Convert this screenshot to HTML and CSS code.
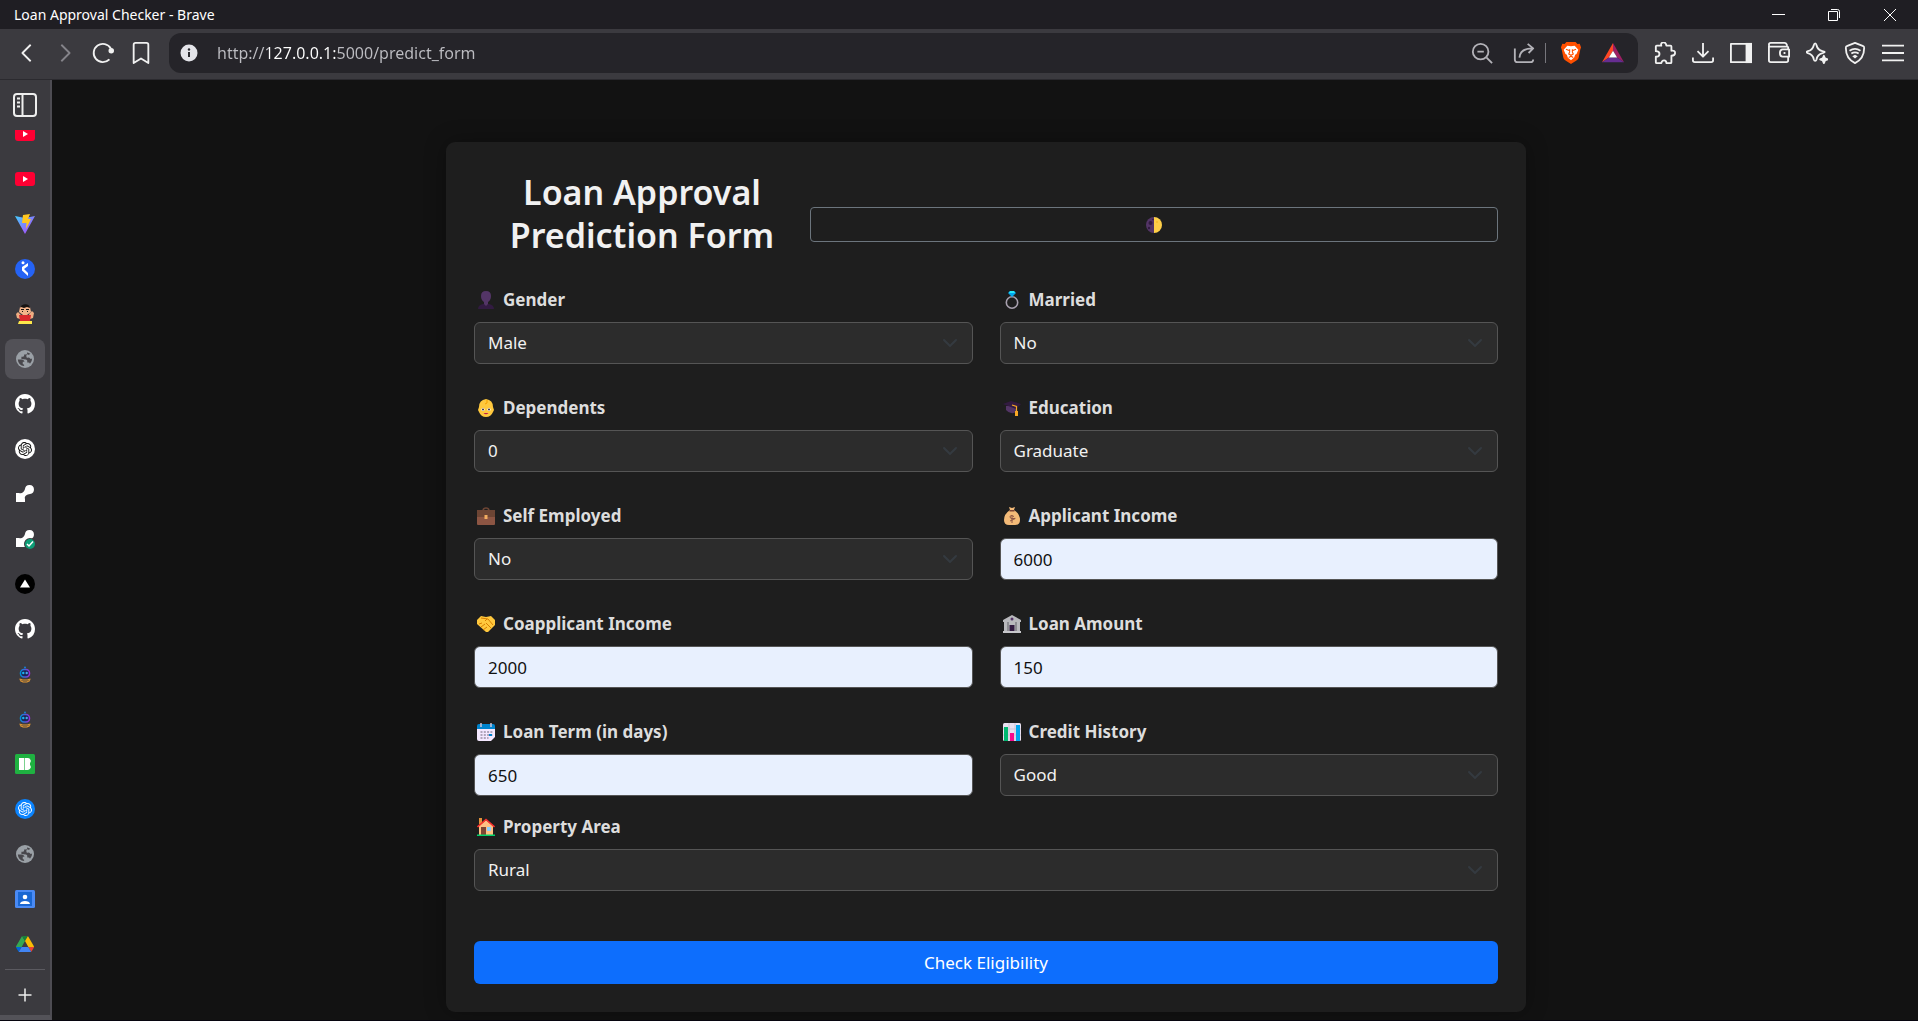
FILE: index.html
```html
<!DOCTYPE html>
<html lang="en">
<head>
<meta charset="utf-8">
<meta name="viewport" content="width=device-width, initial-scale=1">
<title>Loan Approval Checker</title>
<link rel="stylesheet" href="styles.css">
</head>
<body>
<svg class="defs" aria-hidden="true">
  <symbol id="github" viewBox="0 0 16 16"><path fill="#fff" d="M8 0C3.58 0 0 3.58 0 8c0 3.54 2.29 6.53 5.47 7.59.4.07.55-.17.55-.38 0-.19-.01-.82-.01-1.49-2.01.37-2.53-.49-2.69-.94-.09-.23-.48-.94-.82-1.13-.28-.15-.68-.52-.01-.53.63-.01 1.08.58 1.23.82.72 1.21 1.87.87 2.33.66.07-.52.28-.87.51-1.07-1.78-.2-3.64-.89-3.64-3.95 0-.87.31-1.59.82-2.15-.08-.2-.36-1.02.08-2.12 0 0 .67-.21 2.2.82.64-.18 1.32-.27 2-.27s1.36.09 2 .27c1.53-1.04 2.2-.82 2.2-.82.44 1.1.16 1.92.08 2.12.51.56.82 1.27.82 2.15 0 3.07-1.87 3.75-3.65 3.95.29.25.54.73.54 1.48 0 1.07-.01 1.93-.01 2.2 0 .21.15.46.55.38A8.01 8.01 0 0016 8c0-4.42-3.58-8-8-8z"/></symbol>
  <symbol id="youtube" viewBox="0 0 20 20"><rect y="3" width="20" height="14" rx="3" fill="#ff0033"/><path d="M8 7l5 3-5 3z" fill="#fff"/></symbol>
  <symbol id="globe" viewBox="2 2 20 20"><circle cx="12" cy="12" r="10" fill="#9aa0a6"/><path fill="#47464b" d="M4 11.500h6q2 .5 2 2.500-2 0-2 1.500t-2.500 1.700l2 2.300Q4 18 4 11.500zM13 4q-1 2.500-3 2.500t-1.500 2 2.500 1.500q1 2 3 2t2.500 1.500q1.500 1 3.500-1.500 0-6.500-7-8z" opacity="0"/><path fill="#47464b" d="M4 12l5-.2q3 .2 3.200 3.200-2.200-.2-2.700 1.200t.5 3.500Q4.500 18.500 4 12zM13.500 4.200Q14 6 12 6.500T9.800 8.700 8 11H4.100Q5 4.500 13.500 4.200zM13 19.900q.2-2 2-2.400t1.500-2.500q-2-1.200-3.700-2.200t-.6-3.300 3.300-.5 4-1q.8 2 .4 5.500-1.200 5.500-6.900 6.400z" opacity="0"/><path fill="#48474c" d="M4 12.500h4.500q2.500.2 3 2.500h-2v2.500l1.500 1v1.300Q4.500 19 4 12.500zM14.500 4.500v1q-.3 1.500-2 1.500H11v1.500q-.3 1-1.500 1H8V12l5 .5q1.500.3 1.500 1.500v2h1.500q1 .2 1.500 1.200 2.500-2.200 2.400-5.700-1.700 1-2.400-.2t-2.500-.8-1.500-2 1.500-1.500 3-.7Q16 5 14.500 4.500z"/></symbol>
  <symbol id="knot" viewBox="0 0 24 24"><path fill="currentColor" d="M22.2819 9.8211a5.9847 5.9847 0 0 0-.5157-4.9108 6.0462 6.0462 0 0 0-6.5098-2.9A6.0651 6.0651 0 0 0 4.9807 4.1818a5.9847 5.9847 0 0 0-3.9977 2.9 6.0462 6.0462 0 0 0 .7427 7.0966 5.98 5.98 0 0 0 .511 4.9107 6.051 6.051 0 0 0 6.5146 2.9001A5.9847 5.9847 0 0 0 13.2599 24a6.0557 6.0557 0 0 0 5.7718-4.2058 5.9894 5.9894 0 0 0 3.9977-2.9001 6.0557 6.0557 0 0 0-.7475-7.0729zm-9.022 12.6081a4.4755 4.4755 0 0 1-2.8764-1.0408l.1419-.0804 4.7783-2.7582a.7948.7948 0 0 0 .3927-.6813v-6.7369l2.02 1.1686a.071.071 0 0 1 .038.052v5.5826a4.504 4.504 0 0 1-4.4945 4.4944zm-9.6607-4.1254a4.4708 4.4708 0 0 1-.5346-3.0137l.142.0852 4.783 2.7582a.7712.7712 0 0 0 .7806 0l5.8428-3.3685v2.3324a.0804.0804 0 0 1-.0332.0615L9.74 19.9502a4.4992 4.4992 0 0 1-6.1408-1.6464zM2.3408 7.8956a4.485 4.485 0 0 1 2.3655-1.9728V11.6a.7664.7664 0 0 0 .3879.6765l5.8144 3.3543-2.0201 1.1685a.0757.0757 0 0 1-.071 0l-4.8303-2.7865A4.504 4.504 0 0 1 2.3408 7.872zm16.5963 3.8558L13.1038 8.364 15.1192 7.2a.0757.0757 0 0 1 .071 0l4.8303 2.7913a4.4944 4.4944 0 0 1-.6765 8.1042v-5.6772a.79.79 0 0 0-.407-.667zm2.0107-3.0231l-.142-.0852-4.7735-2.7818a.7759.7759 0 0 0-.7854 0L9.409 9.2297V6.8974a.0662.0662 0 0 1 .0284-.0615l4.8303-2.7866a4.4992 4.4992 0 0 1 6.6802 4.66zM8.3065 12.863l-2.02-1.1638a.0804.0804 0 0 1-.038-.0567V6.0742a4.4992 4.4992 0 0 1 7.3757-3.4537l-.142.0805L8.704 5.459a.7948.7948 0 0 0-.3927.6813zm1.0976-2.3654l2.602-1.4998 2.6069 1.4998v2.9994l-2.5974 1.4997-2.6067-1.4997Z"/></symbol>
  <symbol id="dub" viewBox="0 0 20 20"><path fill="#fff" d="M1 9h3c3 1 5-1 6-4a4.500 4.500 0 1 1 5 5c-3 .5-6 2-5 5v3H1z"/></symbol>
  <symbol id="robot" viewBox="0 0 20 20"><circle cx="10" cy="3.500" r="1" fill="#1583d8"/><rect x="5.500" y="5.500" width="9" height="7.500" rx="3.500" fill="#1c2454" stroke="url(#robotGradient)" stroke-width="1.500"/><circle cx="8.300" cy="9" r="1.200" fill="#19b7ee"/><circle cx="11.700" cy="9" r="1.200" fill="#4aa3ee"/><path d="M4.500 15l3 1h5l3-1M5 16.500l3 1.500h4l3-1.500" stroke="#e79b33" fill="none" stroke-width="1.100"/></symbol>
  <linearGradient id="robotGradient"><stop stop-color="#008fd8"/><stop offset="1" stop-color="#9a2bd9"/></linearGradient>
  <linearGradient id="viteGradient" x1="0" y1="0" x2="1" y2="1"><stop stop-color="#41d1ff"/><stop offset="1" stop-color="#bd34fe"/></linearGradient>
  <symbol id="caret" viewBox="0 0 16 16"><path fill="none" stroke="#343a40" stroke-linecap="round" stroke-linejoin="round" stroke-width="2" d="m2 5 6 6 6-6"/></symbol>
</svg>

<header class="titlebar">
  <span class="window-title">Loan Approval Checker - Brave</span>
  <div class="window-controls">
    <button type="button" aria-label="Minimize"><svg viewBox="0 0 14 14"><path d="M1 6.500h13"/></svg></button>
    <button type="button" aria-label="Restore"><svg viewBox="0 0 14 14"><path d="M1.500 3.500h9v9h-9zM4 1.500h6.500q2 0 2 2V10"/></svg></button>
    <button type="button" aria-label="Close"><svg viewBox="0 0 14 14"><path d="M1 1l12 12M13 1L1 13"/></svg></button>
  </div>
</header>

<nav class="toolbar" aria-label="Browser toolbar">
  <div class="tool-group">
    <button type="button" aria-label="Back"><svg class="bold" viewBox="0 0 24 24"><path d="M16 3l-9 9 9 9"/></svg></button>
    <button type="button" aria-label="Forward" class="faded"><svg viewBox="0 0 24 24"><path d="M8 3l9 9-9 9"/></svg></button>
    <button type="button" aria-label="Reload"><svg class="bold" viewBox="0 0 24 24"><path d="M19 19a10 10 0 1 1 1.500-12"/><circle cx="21" cy="9.500" r="2" fill="currentColor"/></svg></button>
    <button type="button" aria-label="Bookmark"><svg viewBox="0 0 24 24"><path d="M4 3q0-2 2-2h12q2 0 2 2v20l-8-5-8 5z"/></svg></button>
  </div>
  <div class="address">
    <svg class="info" viewBox="0 0 18 18"><circle cx="9" cy="9" r="8.500" fill="#e4e4e9"/><path d="M9 8v5" stroke="#29292e" stroke-width="2"/><circle cx="9" cy="5.500" r="1.200" fill="#29292e"/></svg>
    <input class="url" type="text" aria-label="Address" value="http://127.0.0.1:5000/predict_form">
    <button type="button" aria-label="Zoom out"><svg viewBox="0 0 24 24"><circle cx="10.500" cy="10.500" r="8.500"/><path d="M7 10.500h7M17 17l6 6"/></svg></button>
    <button type="button" aria-label="Share"><svg viewBox="0 0 24 24"><path d="M2 7v12q0 3 3 3h14q3 0 3-3M7 17q1-10 14-10M16 2l6 5-5 5"/></svg></button>
    <span class="address-divider"></span>
    <button type="button" aria-label="Brave Shields"><svg class="logo" viewBox="0 0 24 24"><path fill="#ff5000" d="M7 0h10l2 2.300 2.500-.3 1.500 4-.8 2-1.800 9c-.5 3-5.400 5-8.400 7-3-2-7.900-4-8.400-7L1.800 8 1 6l1.500-4 2.500.3z"/><path fill="#fff" d="M8 4l4 .7L16 4l4 4.500-2 4.500-1.500 1-1 3-3.500 2.800-3.500-2.800-1-3-1.500-1L4 8.500z"/><path fill="none" stroke="#ff5000" stroke-width="1.200" d="M6.500 8l3.500 1.300M17.500 8l-3.500 1.300M10.500 8v3l-1 2 2.500 1.500 2.500-1.500-1-2V8M9.500 17l2.500-1.500 2.500 1.500"/></svg></button>
    <button type="button" aria-label="Brave Rewards"><svg class="logo" viewBox="0 0 24 22"><path fill="#ff4724" d="M12 0v8.500L7.500 16 0 21z"/><path fill="#9e1f63" d="M12 0l12 21-7.500-5L12 8.500z"/><path fill="#662d91" d="M0 21l7.500-5h9l7.500 5z"/><path fill="#fff" d="M12 8.500L16.500 16h-9z"/></svg></button>
  </div>
  <div class="tool-group">
    <button type="button" aria-label="Extensions"><svg viewBox="0 0 24 24"><path d="M2 5q0-1 1-1h5q-1-3 2-3.500T13.500 4H18q1 0 1 1v4.500q4-.5 4 2.500t-4 3V22q0 1-1 1h-4.500q0-3-2.500-3t-3 3H3q-1 0-1-1v-6q4 0 4-3t-4-3z"/></svg></button>
    <button type="button" aria-label="Downloads"><svg class="bold" viewBox="0 0 24 24"><path d="M12 1v14M6 10l6 6 6-6M1 17v3q0 2 2 2h18q2 0 2-2v-3"/></svg></button>
    <button type="button" aria-label="Side panel"><svg viewBox="0 0 24 24"><path d="M1 2h22v20H1z"/><path d="M17 1h7v22h-7z" fill="currentColor" stroke="none"/></svg></button>
    <button type="button" aria-label="Wallet"><svg viewBox="0 0 24 24"><path d="M22 8V6q0-1-1-1H2q-1 0-1-2t2-2h15q2 0 3 3M1 4v16q0 2 2 2h17q2 0 2-2v-4M23 8v8h-7q-3 0-3-4t3-4zM18 11v2"/></svg></button>
    <button type="button" aria-label="Leo AI"><svg viewBox="0 0 24 24"><path d="M10 1.500q1 0 1.500 2 1 5 6.500 6.500 2.500.5 2.500 1t-2.500 1.200q-5.500 1.300-6.500 6.800-.5 1.500-1.500 1.500t-1.500-1.500Q7.500 13.500 2 12.200q-1.500-.7-1.500-1.200T2 10Q7 9 8.500 3.500q.5-2 1.500-2z"/><path d="M19.500 15l1.200 2.800 2.800 1.200-2.800 1.200-1.200 2.800-1.200-2.800-2.800-1.200 2.800-1.200z" fill="currentColor"/></svg></button>
    <button type="button" aria-label="VPN"><svg viewBox="0 0 24 24"><path d="M12 1l9 3.500q1 0 1 2Q22 18 12 23 2 18 2 6.500q0-2 1-2zM6 9.500q6-4 12 0M8 12.500q4-2.500 8 0"/><path d="M12 14l3 1.500L12 18l-3-2.500z" fill="currentColor" stroke="none"/></svg></button>
    <button type="button" aria-label="Menu"><svg viewBox="0 0 24 24"><path d="M0 4h24M0 12h24M0 20h24"/></svg></button>
  </div>
</nav>

<div class="workspace">
  <aside class="tabs" aria-label="Vertical tabs">
    <button type="button" class="tabs-toggle" aria-label="Toggle tabs"><svg viewBox="0 0 24 24" fill="none" stroke="#eee" stroke-width="2"><rect x="1" y="1" width="22" height="22" rx="3"/><path d="M9.500 1v22"/><path d="M4 5.500h3M4 9.500h3M4 13.500h3"/></svg></button>
    <div class="tab-list">
      <button type="button" class="tab clipped" aria-label="YouTube"><svg><use href="#youtube"/></svg></button>
      <button type="button" class="tab" aria-label="YouTube"><svg><use href="#youtube"/></svg></button>
      <button type="button" class="tab" aria-label="Vite"><svg viewBox="0 0 20 20"><path fill="url(#viteGradient)" d="M0 2l10 2L20 2 10 20z"/><path fill="#ffc61f" d="M8 1l7-1-2 5h3l-5 10 .5-6H7z"/></svg></button>
      <button type="button" class="tab" aria-label="Runner"><svg viewBox="0 0 20 20"><circle cx="10" cy="10" r="10" fill="#2563f5"/><circle cx="8" cy="3.800" r="1.500" fill="#fff"/><path fill="#fff" d="M13 4v3l-4 3 4 4v3l-6-5.500V8z"/></svg></button>
      <button type="button" class="tab" aria-label="Cartoon"><svg viewBox="0 0 20 20"><path fill="#efad82" d="M1 10l2-2 3 3-1 4-3-1zM19 9l-2-2-3 3 1 5 3-1z"/><path fill="#f3b48a" d="M5 3l5-2 5 2 1 5-4 3H8L4 8z"/><path fill="#171312" d="M5 4c1-5 10-5 10 0l-3-1-3 1-3-1z"/><path stroke="#171312" d="M6 5.500h3M11 5.500h3M7 7.500h1M12 7.500h1"/><path fill="#d9292d" d="M4 11h12l-1 6H5z"/><path fill="#fde74a" d="M4 17h13v3H3z"/></svg></button>
      <button type="button" class="tab active" aria-label="Loan Approval Checker"><svg class="small"><use href="#globe"/></svg></button>
      <button type="button" class="tab" aria-label="GitHub"><svg><use href="#github"/></svg></button>
      <button type="button" class="tab" aria-label="ChatGPT"><svg class="gpt" viewBox="0 0 20 20"><circle cx="10" cy="10" r="10" fill="#fff"/><use href="#knot" x="3" y="3" width="14" height="14"/></svg></button>
      <button type="button" class="tab" aria-label="Links"><svg><use href="#dub"/></svg></button>
      <button type="button" class="tab" aria-label="Links verified"><svg viewBox="0 0 20 20"><use href="#dub"/><circle cx="15" cy="15" r="6" fill="#3b3a3f"/><circle cx="15" cy="15" r="5" fill="#0c9d76"/><path d="M12 15l2 2 4-4.500" fill="none" stroke="#fff" stroke-width="1.500"/></svg></button>
      <button type="button" class="tab" aria-label="Vercel"><svg viewBox="0 0 20 20"><circle cx="10" cy="10" r="10"/><path fill="#fff" d="M10 5.500l5 8H5z"/></svg></button>
      <button type="button" class="tab" aria-label="GitHub"><svg><use href="#github"/></svg></button>
      <button type="button" class="tab" aria-label="Assistant"><svg><use href="#robot"/></svg></button>
      <button type="button" class="tab" aria-label="Assistant"><svg><use href="#robot"/></svg></button>
      <button type="button" class="tab" aria-label="Icons"><svg viewBox="0 0 20 20"><rect width="20" height="20" rx="1.500" fill="#1fb141"/><path fill="#fff" d="M4 4h5v12H4zM9 4h4a3 3 0 0 1 2 5v2a3 3 0 0 1-2 5H9z"/><path stroke="#1fb141" stroke-width=".6" d="M9.500 4v12"/></svg></button>
      <button type="button" class="tab" aria-label="Assistant"><svg class="gpt-blue" viewBox="0 0 20 20"><circle cx="10" cy="10" r="10" fill="#0b84ff"/><use href="#knot" x="3" y="3" width="14" height="14"/></svg></button>
      <button type="button" class="tab" aria-label="Page"><svg class="small"><use href="#globe"/></svg></button>
      <button type="button" class="tab" aria-label="Contacts"><svg viewBox="0 0 20 20"><rect y="1" width="20" height="18" rx="1.500" fill="#4a8af4"/><path fill="#1967d2" d="M3 3h14v14H3z"/><circle cx="10" cy="8" r="2.300" fill="#fff"/><path fill="#fff" d="M5 15c0-4 10-4 10 0z"/></svg></button>
      <button type="button" class="tab" aria-label="Drive"><svg class="small" viewBox="0 0 87.300 78"><path d="m6.600 66.850 3.850 6.650c.8 1.400 1.950 2.500 3.300 3.300l13.750-23.800h-27.500c0 1.550.4 3.100 1.200 4.500z" fill="#0066da"/><path d="m43.650 25-13.750-23.800c-1.350.8-2.500 1.900-3.300 3.300l-25.400 44a9.060 9.060 0 0 0-1.200 4.500h27.500z" fill="#34a853"/><path d="m73.550 76.800c1.350-.8 2.500-1.900 3.300-3.300l1.600-2.750 7.650-13.250c.8-1.400 1.200-2.950 1.200-4.500h-27.500l5.850 11.500z" fill="#ea4335"/><path d="m43.650 25 13.750-23.800c-1.350-.8-2.900-1.200-4.500-1.200h-18.500c-1.600 0-3.150.45-4.500 1.200z" fill="#188038"/><path d="m59.800 53h-32.300l-13.750 23.800c1.350.8 2.900 1.200 4.500 1.200h50.800c1.600 0 3.150-.45 4.500-1.200z" fill="#4285f4"/><path d="m73.400 26.500-12.700-22c-.8-1.400-1.950-2.500-3.300-3.300l-13.750 23.800 16.150 28h27.450c0-1.550-.4-3.100-1.200-4.500z" fill="#fbbc04"/></svg></button>
    </div>
    <hr class="tabs-rule">
    <button type="button" class="tab" aria-label="New tab"><svg viewBox="0 0 20 20"><path d="M10 3.500v13M3.500 10h13" stroke="#eee" stroke-width="1.500"/></svg></button>
  </aside>

  <main class="page">
    <section class="card">
      <div class="card-head">
        <h1>Loan Approval Prediction Form</h1>
        <button type="button" class="theme-toggle" aria-label="Toggle theme"><svg viewBox="0 0 16 16"><path fill="#533566" d="M8 0a8 8 0 0 0 0 16z"/><path fill="#ffcf48" d="M8 0a8 8 0 0 1 0 16z"/><circle cx="4.500" cy="6" r="2" fill="#321b41"/><circle cx="3" cy="11" r="1.200" fill="#321b41"/><circle cx="7" cy="2.500" r=".8" fill="#321b41"/><circle cx="11" cy="5" r="1" fill="#f9bc28"/></svg></button>
      </div>
      <form class="form">
        <div class="field">
          <label for="gender"><svg viewBox="0 0 18 18"><path fill="#321b41" d="M1 18q0-4 5-5h6q5 1 5 5z"/><path fill="#533566" d="M4 5q0-5 5-5t5 5q0 4-3 6v2l-2 2-2-2v-2Q4 9 4 5z"/></svg>Gender</label>
          <div class="select"><select id="gender"><option>Male</option><option>Female</option></select><svg><use href="#caret"/></svg></div>
        </div>
        <div class="field">
          <label for="married"><svg viewBox="0 0 18 18"><circle cx="9" cy="11.500" r="5.700" fill="none" stroke="#a8a0ae" stroke-width="1.600"/><path fill="#00a6ed" d="M7 0h4l2 2-4 4-4-4z"/><path fill="#26eafc" d="M7 0h4l1 2H6z"/></svg>Married</label>
          <div class="select"><select id="married"><option>No</option><option>Yes</option></select><svg><use href="#caret"/></svg></div>
        </div>
        <div class="field">
          <label for="dependents"><svg viewBox="0 0 18 18"><path fill="#ffc83d" d="M9 0q7 1 7 8l1 3-1 2q-2 5-7 5t-7-5l-1-2 1-3q0-7 7-8z"/><path fill="none" stroke="#f59f00" d="M10 1q1 4-2 4"/><circle cx="6" cy="10.500" r="1.600" fill="#fff"/><circle cx="12" cy="10.500" r="1.600" fill="#fff"/><circle cx="6" cy="10.500" r="1" fill="#402a32"/><circle cx="12" cy="10.500" r="1" fill="#402a32"/><path fill="#bb1d50" d="M6.500 14h5q-2.500 2.500-5 0z"/></svg>Dependents</label>
          <div class="select"><select id="dependents"><option>0</option><option>1</option><option>2</option><option>3+</option></select><svg><use href="#caret"/></svg></div>
        </div>
        <div class="field">
          <label for="education"><svg viewBox="0 0 18 18"><path fill="#533566" d="M3 7v4q4 5 11 2V7z"/><path fill="#321b41" d="M0 5l8-3 10 3-5 5z"/><path fill="none" stroke="#f9a825" stroke-width="1.200" d="M9 6l4.500 1.500V13"/><path fill="#f9a825" d="M12 12h3v5h-3z"/></svg>Education</label>
          <div class="select"><select id="education"><option>Graduate</option><option>Not Graduate</option></select><svg><use href="#caret"/></svg></div>
        </div>
        <div class="field">
          <label for="self-employed"><svg viewBox="0 0 18 18"><path fill="none" stroke="#6d4534" stroke-width="1.500" d="M6 4q0-3 3-3t3 3"/><rect y="3" width="18" height="15" rx="1" fill="#8c5543"/><path fill="#6d4534" d="M0 4q0-1 1-1h16q1 0 1 1v6H0z"/><rect x="7.500" y="8" width="3" height="4" fill="#f3ad61"/></svg>Self Employed</label>
          <div class="select"><select id="self-employed"><option>No</option><option>Yes</option></select><svg><use href="#caret"/></svg></div>
        </div>
        <div class="field">
          <label for="applicant-income"><svg viewBox="0 0 18 18"><path fill="#f3ba78" d="M6 0l3 1 3-1-1 3q6 4 6 10 0 5-5 5H6q-5 0-5-5Q1 7 7 3z"/><path fill="#7d4533" d="M6.500 3h5v1.500h-5z"/><path fill="none" stroke="#8d5543" d="M11 9.500q-4-2-4 .5t4 1.500-4 2.500M9 8v8"/></svg>Applicant Income</label>
          <input id="applicant-income" type="text" inputmode="numeric" value="6000">
        </div>
        <div class="field">
          <label for="coapplicant-income"><svg viewBox="0 0 18 18"><path fill="#ffc83d" d="M0 5l4-4 5 1 5-1 4 4v5l-7 7H9L0 9z"/><path fill="none" stroke="#d67d00" d="M4 3l7 1 5 6M8 6l2-2M2 9l3-1M4 12l4-3M6 15l4-3M9 8l5 5"/></svg>Coapplicant Income</label>
          <input id="coapplicant-income" type="text" inputmode="numeric" value="2000">
        </div>
        <div class="field">
          <label for="loan-amount"><svg viewBox="0 0 18 18"><path fill="#b9b9bd" d="M0 5l9-5 9 5v2H0zM1 7h16v9H1z"/><path fill="#8d8d92" d="M4 7h2v9H4zM12 7h2v9h-2z"/><path fill="#c8c8cc" d="M0 16h18v2H0z"/><path fill="#321b41" d="M6.500 10h5v6h-5z"/><circle cx="9" cy="4" r="1.500" fill="#533566"/></svg>Loan Amount</label>
          <input id="loan-amount" type="text" inputmode="numeric" value="150">
        </div>
        <div class="field">
          <label for="loan-term"><svg viewBox="0 0 18 18"><path fill="#f4e8ff" d="M0 3h18v11l-4 4H2q-2 0-2-2z"/><path fill="#0084ce" d="M0 6V3q0-2 2-2h14q2 0 2 2v3z"/><path stroke="#cdc4d6" stroke-width="1.500" d="M4 0v4M14 0v4"/><path stroke="#998ea4" stroke-width="1.500" stroke-dasharray="2 1.300" d="M3.500 9h12M3.500 12h12M3.500 15h8"/><path fill="#0084ce" d="M12 11h3v2h-3z"/></svg>Loan Term (in days)</label>
          <input id="loan-term" type="text" inputmode="numeric" value="650">
        </div>
        <div class="field">
          <label for="credit-history"><svg viewBox="0 0 18 18"><rect width="18" height="18" rx="1.500" fill="#e9e0f0"/><path stroke="#cdc4d6" d="M0 6h18M0 12h18M6 0v18M12 0v18"/><path fill="#00b870" d="M1 4h4v14H1z"/><path fill="#f70a8d" d="M7 10h4v8H7z"/><path fill="#00a6ed" d="M13 2h4v16h-4z"/></svg>Credit History</label>
          <div class="select"><select id="credit-history"><option>Good</option><option>Bad</option></select><svg><use href="#caret"/></svg></div>
        </div>
        <div class="field wide">
          <label for="property-area"><svg viewBox="0 0 18 18"><path fill="#e0913a" d="M2 0h3v6H2z"/><path fill="#ffc083" d="M2 8l7-6 7 6v9H2z"/><path fill="none" stroke="#f8312f" stroke-width="1.600" d="M.5 9L9 1.500 17.500 9"/><path fill="#7d4533" d="M4 9h5v8H4z"/><path fill="#8cd0ff" d="M10 9h4v4h-4z"/><path fill="#00d26a" d="M0 16.500h18V18H0z"/></svg>Property Area</label>
          <div class="select"><select id="property-area"><option>Rural</option><option>Semiurban</option><option>Urban</option></select><svg><use href="#caret"/></svg></div>
        </div>
        <button type="submit" class="submit">Check Eligibility</button>
      </form>
    </section>
  </main>
</div>
</body>
</html>
```
FILE: styles.css
```css
* {
  box-sizing: border-box;
}

body {
  margin: 0;
  min-height: 100vh;
  display: flex;
  flex-direction: column;
  background: #121212;
  border-bottom: 1px solid #06040e;
  color: #f1f1f1;
  font-family: "Noto Sans", "Open Sans", sans-serif;
  font-size: 17px;
  line-height: 24px;
}

button,
input,
select {
  font: inherit;
  color: inherit;
}

button {
  padding: 0;
  border: 0;
  background: none;
  cursor: pointer;
}

svg {
  display: block;
  flex: none;
}

.defs {
  position: absolute;
  width: 0;
  height: 0;
}

/* Window title bar */
.titlebar {
  display: flex;
  align-items: center;
  justify-content: space-between;
  height: 29px;
  padding-left: 14px;
  background: #1f1e23;
}

.window-title {
  font-size: 14px;
  color: #fff;
}

.window-controls {
  display: flex;
}

.window-controls button {
  display: grid;
  place-items: center;
  width: 56px;
  height: 29px;
}

.window-controls svg {
  width: 14px;
  height: 14px;
  fill: none;
  stroke: #fff;
}

/* Navigation toolbar */
.toolbar {
  display: flex;
  align-items: center;
  height: 51px;
  padding: 0 6px 2px 8px;
  background: #3b3a3f;
  border-bottom: 1px solid #2b2a2f;
}

.toolbar button {
  display: grid;
  place-items: center;
  width: 38px;
  height: 40px;
}

.toolbar svg {
  width: 22px;
  height: 22px;
  fill: none;
  stroke: currentColor;
  stroke-width: 2;
  stroke-linejoin: round;
}

.toolbar .logo,
.toolbar .info {
  stroke: none;
}

.toolbar .faded {
  color: #85848a;
}

.tool-group {
  display: flex;
}

.address {
  flex: 1;
  display: flex;
  align-items: center;
  height: 40px;
  margin: 0 8px 0 9px;
  padding: 0 4px 0 11px;
  border-radius: 12px;
  background: #252429;
}

.address button {
  width: 42px;
  color: #b3b2b8;
}

.address .info {
  width: 18px;
  height: 18px;
}

/* The host part of the address is brighter than the scheme and path */
.url {
  flex: 1;
  min-width: 0;
  height: 40px;
  padding: 0 0 0 19px;
  border: 0;
  outline: 0;
  background: linear-gradient(90deg, #bdbdc2 71px, #fff 71px, #fff 139px, #bdbdc2 139px);
  background-clip: text;
  -webkit-text-fill-color: transparent;
  font-size: 16px;
}

.address-divider {
  width: 1px;
  height: 20px;
  margin-right: 4px;
  background: #77767c;
}

/* Vertical tabs */
.workspace {
  flex: 1;
  display: flex;
}

.tabs {
  flex: none;
  display: flex;
  flex-direction: column;
  align-items: center;
  width: 52px;
  padding-top: 13px;
  background: #3b3a3f;
  border-right: 2px solid #4d4c52;
  border-bottom: 5px solid #535258;
}

.tabs-toggle {
  margin-bottom: 13px;
}

.tabs-toggle svg {
  width: 24px;
  height: 24px;
}

.tab-list {
  display: flex;
  flex-direction: column;
  gap: 5px;
}

.tab {
  display: grid;
  place-items: center;
  width: 40px;
  height: 40px;
  border-radius: 8px;
}

.tab svg {
  width: 20px;
  height: 20px;
}

.tab svg.small {
  width: 18px;
  height: 18px;
}

.tab.active {
  background: #525157;
}

.tab.clipped {
  height: 24px;
  padding-bottom: 10px;
  align-content: end;
  border-radius: 0;
  overflow: hidden;
}

.gpt {
  color: #111;
}

.gpt-blue {
  color: #fff;
}

.tabs-rule {
  width: 40px;
  margin: 5px 0;
  border: 0;
  border-top: 1px solid #5b5a60;
}

/* Loan form page */
.page {
  flex: 1;
  padding: 62px 24px 8px 26px;
}

.card {
  max-width: 1080px;
  margin: 0 auto;
  padding: 29px 28px 28px;
  border-radius: 9px;
  background: #1e1e1e;
  box-shadow: 0 0 22px rgba(0, 0, 0, 0.3);
}

.card-head {
  display: grid;
  grid-template-columns: 21fr 43fr;
  align-items: center;
  margin-bottom: 10px;
}

h1 {
  margin: 0 0 21px;
  padding: 0 32px;
  font-size: 34px;
  font-weight: 600;
  line-height: 43px;
  text-align: center;
}

.theme-toggle {
  display: grid;
  place-items: center;
  height: 35px;
  border: 1px solid #6c757d;
  border-radius: 4px;
}

.theme-toggle svg {
  width: 16px;
  height: 16px;
}

.form {
  display: grid;
  grid-template-columns: 1fr 1fr;
  gap: 32px 27px;
}

.field {
  min-width: 0;
}

.field label {
  display: flex;
  align-items: center;
  gap: 8px;
  margin-bottom: 10px;
  padding-left: 3px;
  color: #ddd;
  font-weight: 700;
}

.field label svg {
  width: 18px;
  height: 18px;
}

.field input,
.field select {
  display: block;
  width: 100%;
  height: 42px;
  padding: 0 13px;
  border: 1px solid #555;
  border-radius: 6px;
}

.field input {
  background: #e8f0fe;
  color: #111;
}

.field select {
  appearance: none;
  background: #2c2c2c;
  color: #f1f1f1;
}

.select {
  position: relative;
}

.select svg {
  position: absolute;
  top: 13px;
  right: 15px;
  width: 16px;
  height: 16px;
  pointer-events: none;
}

.wide {
  grid-column: 1 / -1;
  margin-top: -13px;
}

.submit {
  grid-column: 1 / -1;
  height: 43px;
  margin-top: 18px;
  border-radius: 6px;
  background: #0d6efd;
  color: #fff;
}
```
